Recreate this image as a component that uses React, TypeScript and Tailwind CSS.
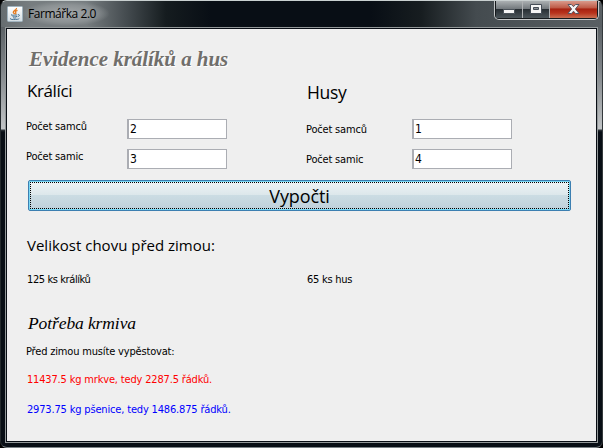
import type { ReactNode } from 'react';

const small = "font-['DejaVu_Sans_Condensed','DejaVu_Sans',sans-serif] [font-stretch:condensed] text-[11px] leading-[14px] whitespace-nowrap";
const large = "font-['Open_Sans',sans-serif] leading-6 whitespace-nowrap text-black";

function JavaIcon() {
  return (
    <svg width="16" height="16" viewBox="0 0 16 16" className="block shrink-0">
      <defs>
        <linearGradient id="tile" x2="0" y2="1">
          <stop stopColor="#fff" />
          <stop offset="1" stopColor="#d3dde3" />
        </linearGradient>
      </defs>
      <rect x=".5" y=".5" width="15" height="15" rx="1" fill="url(#tile)" stroke="#a1b4c0" />
      <path d="M9.5 2C10 4 6.2 4.5 6.3 6.2c0 .8 1.2 1.3 1.2 2M10.5 4.3C8 5.2 8.2 6 8.8 6.7c.4.6 0 1.1-.6 1.6" fill="none" stroke="#e5791b" strokeWidth="1.3" />
      <path d="M5 8.6c-2 .6 0 .9 5.3.3M11 8.7c2.3-.3 1.8 1.6-.4 2M5.5 10.3c.7.6 3 .6 4.5.1M6 11.8c.8.5 2.2.4 3.3.1M4 12.3c-2 .9 1 1.4 4.5 1.2 2.4-.1 3.4-.5 3.8-1" fill="none" stroke="#4e7896" strokeWidth="1" />
    </svg>
  );
}

function WindowButtons() {
  return (
    <div className="flex h-[19px] w-[105px] overflow-hidden rounded-b-[5px] border border-t-0 border-[#c3c6c7] bg-[#15191c] p-px pt-0">
      <div className="flex w-[27px] items-end justify-center border-r border-[#aeb1b3] bg-[linear-gradient(#abb0b2_0%,#747a7e_45%,#252c31_46%,#4c555a_100%)] pb-[3px]">
        <svg width="13" height="6"><path d="M.5 .5h11v4H.5z" fill="#f5f5f5" stroke="#4b535a" /></svg>
      </div>
      <div className="flex w-[27px] items-start justify-center border-r border-[#aeb1b3] bg-[linear-gradient(#abb0b2_0%,#747a7e_45%,#252c31_46%,#4c555a_100%)] pt-[3px]">
        <svg width="13" height="11">
          <path d="M.5 .5h11v9H.5z" fill="#f5f5f5" stroke="#454d56" />
          <path d="M3.5 3.5h5v2h-5z" fill="#8b9195" stroke="#454d56" />
        </svg>
      </div>
      <div className="flex flex-1 items-start justify-center bg-[linear-gradient(#d99a8b_0%,#bd5743_42%,#a52110_46%,#b7321b_70%,#c96e50_100%)] pt-[3px]">
        <svg width="13" height="11" viewBox="0 0 13 11">
          <path d="M1 .5h3.4l2.1 2.2L8.6.5H12L8.4 5 12 9.5H8.6L6.5 7.2 4.4 9.5H1L4.6 5z" fill="#f7f5f5" stroke="#555661" />
        </svg>
      </div>
    </div>
  );
}

function Field({ label, value, labelClass }: { label: string; value: string; labelClass: string }) {
  return (
    <div className="flex h-[30px] items-start">
      <span className={`${small} -ml-px tracking-[-0.18px] ${labelClass}`}>{label}</span>
      <input readOnly value={value} className="h-[20px] w-[100px] rounded-none border border-l-2 border-[#abadb3] bg-white pl-px font-['DejaVu_Sans_Condensed','DejaVu_Sans',sans-serif] text-[12px] text-black outline-none" />
    </div>
  );
}

function Group({ title, children }: { title: ReactNode; children: ReactNode }) {
  return (
    <section className="w-[280px]">
      {title}
      <div className="pt-[16px]">{children}</div>
    </section>
  );
}

export default function App() {
  return (
    <div className="h-[448px] w-[603px] overflow-hidden bg-black">
      <div className="flex h-full w-full flex-col rounded-[7px] border border-[#c9d0d0] border-b-[#7c8387] border-l-[#242a2d] border-r-[#34393c] bg-[linear-gradient(#535a5e_0px,#5c6266_26px,#81868a_70px,#c2c5c7_128px,#30373b_129px,#080e15_131px,#080e15_100%)]">
        <header className="flex h-[26px] shrink-0 items-start rounded-t-[6px] bg-[linear-gradient(90deg,#666d70_0px,#777d80_30px,#777d80_85px,#454c50_125px,#151c1f_165px,#080e15_210px,#080e15_370px,#171d20_420px,#444b4f_475px,#5a6064_602px)] pl-[6px]">
          <div className="pt-[5px]"><JavaIcon /></div>
          <div className="flex h-[25px] w-[86px] items-center rounded-full bg-[radial-gradient(ellipse,#a4a8aa_0%,#989d9fa0_50%,transparent_72%)] pl-[5px]">
            <span className="font-['Open_Sans',sans-serif] text-[12px] tracking-[-0.45px] whitespace-nowrap text-black">Farmářka 2.0</span>
          </div>
          <div className="mr-[3px] ml-auto"><WindowButtons /></div>
        </header>
        <main className="mx-[4px] mb-[4px] flex-1 border border-[#939899] bg-[#080d14] p-px">
          <div className="h-full w-full bg-[#efefef] pl-[20px]">
            <h1 className="h-[50px] pt-[17px] pl-[2px] font-['Liberation_Serif',serif] text-[21px] leading-[26px] font-bold tracking-[-0.04px] whitespace-nowrap text-[#706e6b] italic [text-shadow:1px_1px_#fff]">Evidence králíků a hus</h1>
            <div className="flex h-[101px]">
              <Group title={<h2 className={`${large} text-[17px] tracking-[-0.4px]`}>Králíci</h2>}>
                <Field label="Počet samců" value="2" labelClass="w-[101px] pt-px" />
                <Field label="Počet samic" value="3" labelClass="w-[101px] pt-px" />
              </Group>
              <Group title={<h2 className={`${large} h-[24px] pt-px text-[17.5px] tracking-[-0.3px]`}>Husy</h2>}>
                <Field label="Počet samců" value="1" labelClass="w-[106px] pt-[4px]" />
                <Field label="Počet samic" value="4" labelClass="w-[106px] pt-[4px]" />
              </Group>
            </div>
            <button className="ml-px flex h-[31px] w-[543px] items-center justify-center rounded-[2px] border border-[#3c7fb1] bg-[linear-gradient(#eff4f6_0%,#dce7eb_48%,#cbdce3_50%,#bfd0da_100%)] p-px shadow-[inset_0_0_0_1px_#7bd9f5]">
              <span className={`flex h-full w-full items-center justify-center border border-dotted border-black text-[18px] tracking-[-0.1px] ${large}`}>Vypočti</span>
            </button>
            <h2 className={`${large} mt-[22px] text-[15px]`}>Velikost chovu před zimou:</h2>
            <div className="mt-[16px] flex">
              <p className={`${small} w-[280px] tracking-[-0.4px]`}>125 ks králíků</p>
              <p className={`${small} tracking-[-0.25px]`}>65 ks hus</p>
            </div>
            <h2 className="mt-[23px] pl-px font-['Liberation_Serif',serif] text-[17.5px] leading-[26px] tracking-[-0.1px] whitespace-nowrap text-black italic">Potřeba krmiva</h2>
            <p className={`${small} mt-[9px] -ml-px tracking-[-0.17px]`}>Před zimou musíte vypěstovat:</p>
            <p className={`${small} mt-[14px] tracking-[-0.17px] text-[#ff0000]`}>11437.5 kg mrkve, tedy 2287.5 řádků.</p>
            <p className={`${small} mt-[16px] tracking-[-0.17px] text-[#0000ff]`}>2973.75 kg pšenice, tedy 1486.875 řádků.</p>
          </div>
        </main>
      </div>
    </div>
  );
}
